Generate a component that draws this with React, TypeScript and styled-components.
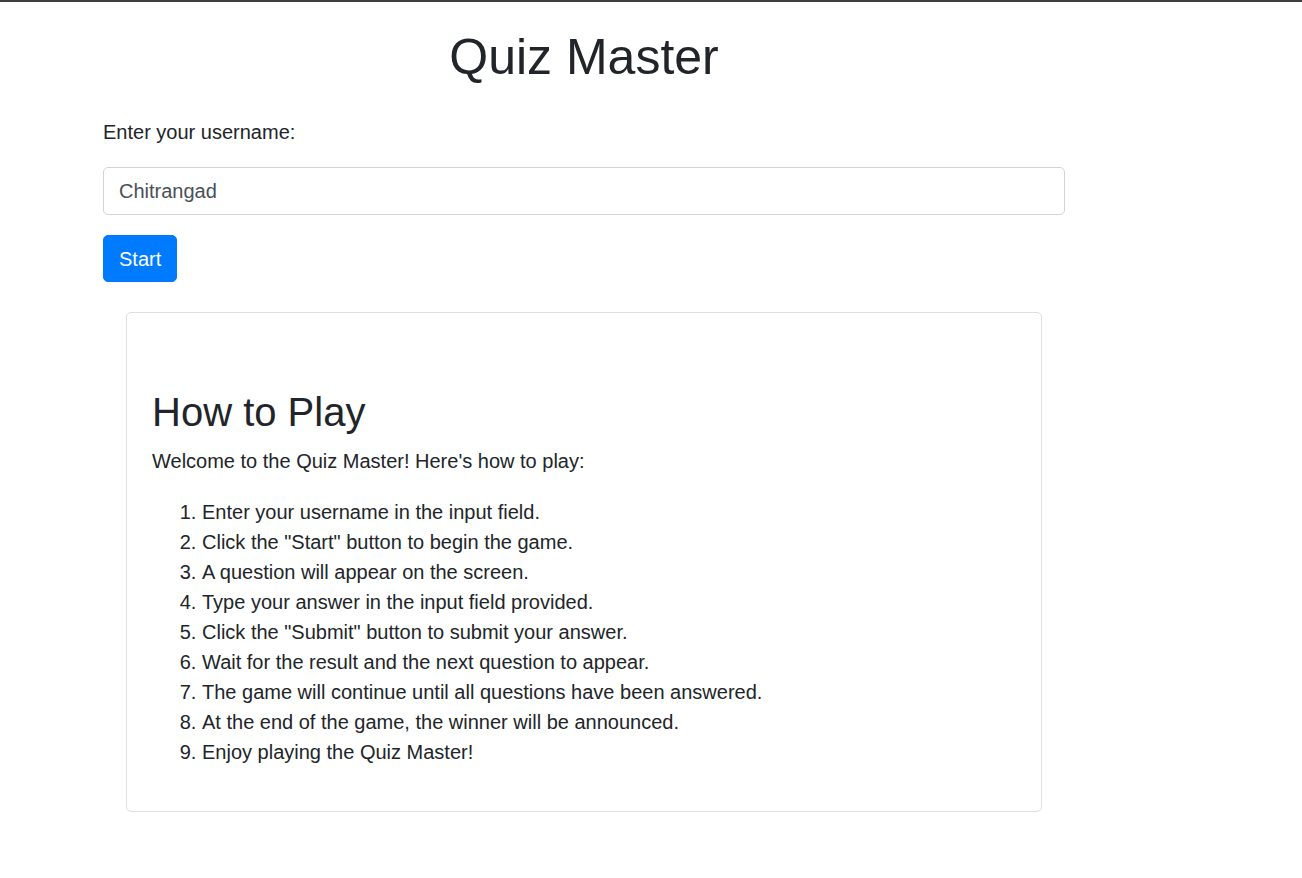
import React, { FC } from 'react'
import styled, { createGlobalStyle } from 'styled-components'

const GlobalStyle = createGlobalStyle`
  * {
    box-sizing: border-box;
  }

  body {
    margin: 0;
    border-top: 2px solid #3f3f3f;
    background: #fff;
    color: #212529;
    font-family: 'Liberation Sans', Arial, sans-serif;
    font-size: 20px;
    line-height: 1.5;
  }
`

const steps = [
  'Enter your username in the input field.',
  'Click the "Start" button to begin the game.',
  'A question will appear on the screen.',
  'Type your answer in the input field provided.',
  'Click the "Submit" button to submit your answer.',
  'Wait for the result and the next question to appear.',
  'The game will continue until all questions have been answered.',
  'At the end of the game, the winner will be announced.',
  'Enjoy playing the Quiz Master!',
]

const Container = styled.main`
  width: 962px;
  margin-left: 103px;
  padding-top: 25px;
  padding-bottom: 60px;
`

const Title = styled.h1`
  margin: 0 0 30px;
  font-size: 50px;
  font-weight: 500;
  line-height: 1.2;
  text-align: center;
`

const Label = styled.label`
  display: block;
  margin-bottom: 20px;
`

const Input = styled.input`
  display: block;
  width: 100%;
  height: 48px;
  padding: 7.5px 15px;
  border: 1px solid #ced4da;
  border-radius: 5px;
  color: #495057;
  font-family: inherit;
  font-size: 20px;
  line-height: 1.5;
  outline: none;
`

const Button = styled.button`
  display: block;
  margin-top: 20px;
  height: 47px;
  padding: 7.5px 15px;
  border: 1px solid #007bff;
  border-radius: 5px;
  background-color: #007bff;
  color: #fff;
  font-family: inherit;
  font-size: 20px;
  line-height: 1.5;
  cursor: pointer;
`

const Card = styled.section`
  margin: 30px 23px 0;
  padding: 25px;
  border: 1px solid rgba(0, 0, 0, 0.125);
  border-radius: 5px;
`

const CardTitle = styled.h2`
  margin: 50px 0 10px;
  font-size: 40px;
  font-weight: 500;
  line-height: 1.2;
`

const Text = styled.p`
  margin: 0 0 21px;
`

const Steps = styled.ol`
  margin: 0 0 19px;
  padding-left: 50px;
`

const App: FC = () => {
  return (
    <>
      <GlobalStyle />
      <Container>
        <Title>Quiz Master</Title>

        <Label htmlFor='username'>Enter your username:</Label>
        <Input id='username' type='text' defaultValue='Chitrangad' />
        <Button type='button'>Start</Button>

        <Card>
          <CardTitle>How to Play</CardTitle>
          <Text>Welcome to the Quiz Master! Here's how to play:</Text>
          <Steps>
            {steps.map((step) => (
              <li key={step}>{step}</li>
            ))}
          </Steps>
        </Card>
      </Container>
    </>
  )
}

export default App
